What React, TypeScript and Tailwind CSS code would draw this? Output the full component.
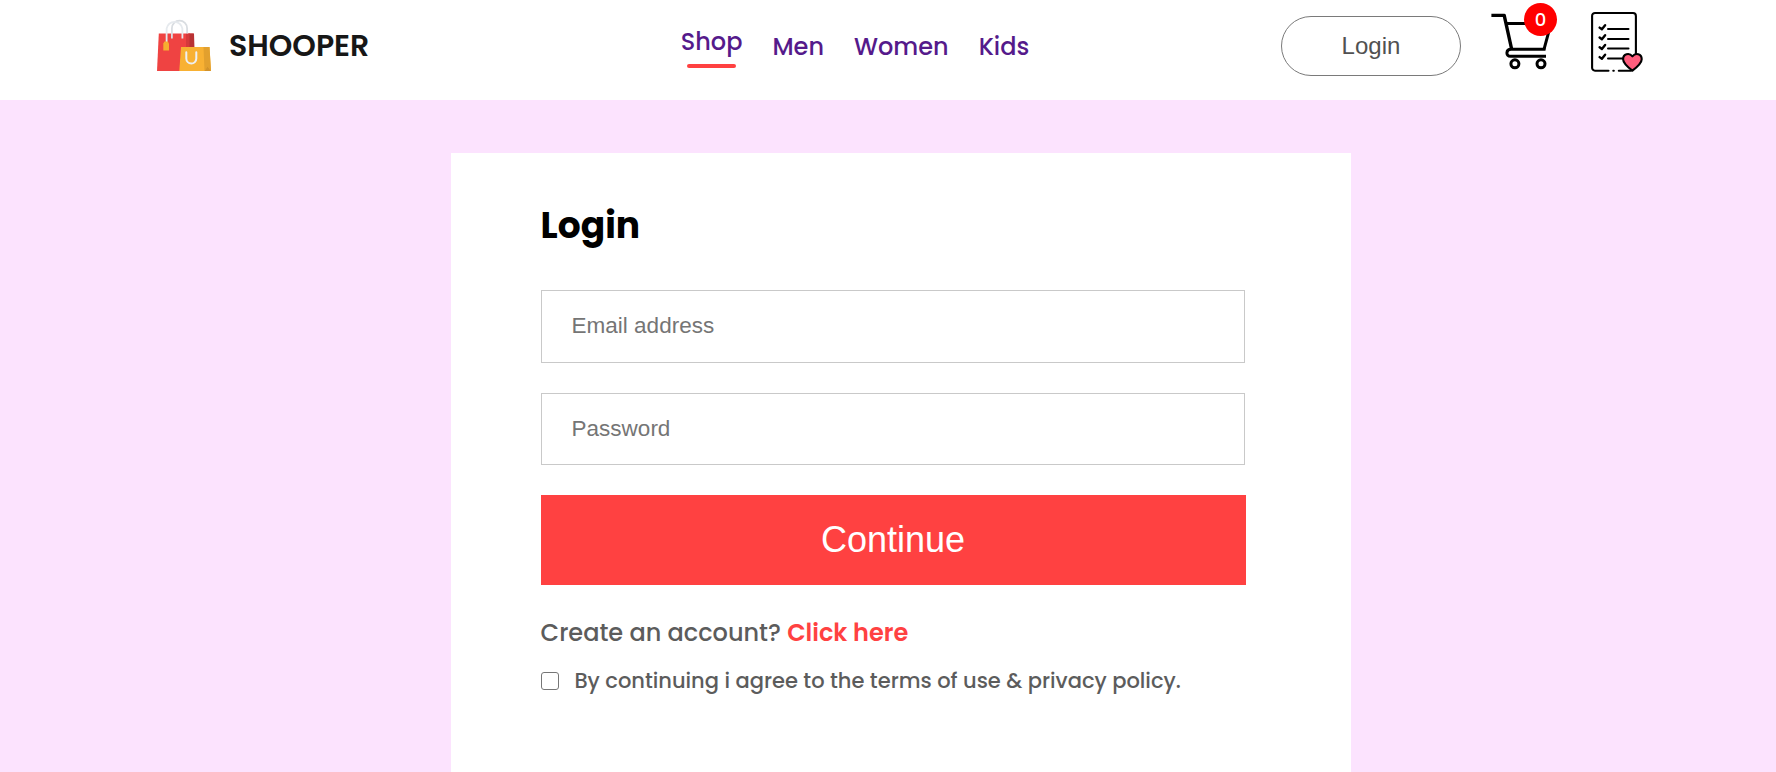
function BagLogo() {
  return (
    <svg width="60" height="60" viewBox="0 0 60 60" fill="none" className="shrink-0">
      <path d="M3.8 18.5H38.5V56H2Z" fill="#ef4342" />
      <path d="M34 18.5H39L39.5 34L34 32Z" fill="#b83234" />
      <path d="M31 18.5H34.5V32H31Z" fill="#d63a3b" />
      <path d="M16.9 23.5V13.3a7.6 7.6 0 0 1 15.2 0V18.5" stroke="#d9dde1" strokeWidth="1.8" />
      <path d="M11.6 27V13.6a8 8 0 0 1 15.8 0V23.5" stroke="#e6eaee" strokeWidth="1.8" />
      <path d="M9.5 26.5H12.8L14 28.5V35.5H8.3V28.5Z" fill="#f6ad30" />
      <path d="M26 32H54.5L56 56H24.3Z" fill="#f8b133" />
      <path d="M48.5 32H54.5L56 56L52.5 51.5L49.5 56Z" fill="#e2a02e" />
      <path d="M52.5 51.5L56 56H49.5Z" fill="#d1922b" />
      <path d="M31.3 37.2V43.6a5 5 0 0 0 10 0V37.2" stroke="#eef0f2" strokeWidth="2" strokeLinecap="round" />
    </svg>
  );
}

function CartIcon() {
  return (
    <svg width="62" height="62" viewBox="0 0 62 62" fill="none" stroke="#000" strokeWidth="3" strokeLinejoin="round" className="block">
      <path d="M1.4 6.4H14.2L21.5 39.5" strokeWidth="3.4" />
      <path d="M16.5 14.4H61L54 40.3" />
      <path d="M55.5 40.3H21C15.8 40.3 15.5 47.2 20.5 47.3H56" />
      <circle cx="24.9" cy="54.8" r="4" />
      <circle cx="51" cy="54.8" r="4" />
    </svg>
  );
}

function WishlistIcon() {
  return (
    <svg width="54" height="62" viewBox="0 0 54 62" fill="none" stroke="#000" strokeWidth="2.1" strokeLinecap="round" strokeLinejoin="round" className="block">
      <path d="M18.5 60.7H5a2.9 2.9 0 0 1-2.9-2.9V5.9A2.9 2.9 0 0 1 5 3H43a2.9 2.9 0 0 1 2.9 2.9V45" />
      <path d="M23.3 60.7h.5M28.8 60.7H41" />
      <g strokeWidth="2">
        <path d="M18 19H38.5M18 28.9H38.5M18 38.6H38.5M18 48.4H33" />
      </g>
      <g strokeWidth="2.4">
        <path d="M9.6 17.6l2.3 1.7 3.2-4" />
        <path d="M9.6 27.5l2.3 1.7 3.2-4" />
        <path d="M9.6 37.3l2.3 1.7 3.2-4" />
        <path d="M9.6 47.1l2.3 1.7 3.2-4" />
      </g>
      <path d="M42.4 60.6C39 58 33.1 53.5 33.1 49.2C33.1 44 39.1 42.2 42.4 46.3C45.7 42.2 51.7 44 51.7 49.2C51.7 53.5 45.8 58 42.4 60.6Z" fill="#ff5d7d" />
    </svg>
  );
}

function Header() {
  return (
    <header className="flex h-[100px] items-start bg-white pl-[155px]">
      <div className="flex w-[525.8px] items-start gap-[14px] pt-[15px]">
        <BagLogo />
        <p className="pt-[7.5px] text-[30px] leading-[45px] font-semibold text-[#171717]">SHOOPER</p>
      </div>
      <nav className="flex w-[600.2px] gap-[30px] pt-[24px] text-[24px] leading-9 font-medium text-[#551a8b]">
        <a className="flex flex-col items-center">
          Shop
          <span className="mt-1 h-1 w-4/5 rounded-[10px] bg-[#ff4141]" />
        </a>
        <a className="pt-[5px]">Men</a>
        <a className="pt-[5px]">Women</a>
        <a className="pt-[5px]">Kids</a>
      </nav>
      <button className="mt-4 h-[60px] w-[180px] rounded-full border border-[#7a7a7a] bg-white font-['Liberation_Sans',Arial,sans-serif] text-[24px] text-[#515151]">
        Login
      </button>
      <div className="relative mt-[9px] ml-[29px]">
        <CartIcon />
        <span className="absolute -top-[6px] left-[34px] flex size-[33px] items-center justify-center rounded-full bg-[#ff0000] text-[18px] font-medium text-white">
          0
        </span>
      </div>
      <div className="mt-[10px] ml-[38px]">
        <WishlistIcon />
      </div>
    </header>
  );
}

export default function App() {
  const field =
    "w-[704px] border border-[#c9c9c9] bg-white pl-[30px] font-['Liberation_Sans',Arial,sans-serif] text-[22.5px] text-[#5c5c5c] outline-none placeholder:text-[#757575]";
  return (
    <div className="h-[772px] overflow-hidden bg-white font-['Poppins',sans-serif]">
      <Header />
      <main className="flex h-[672px] justify-center bg-[#fce3fe] pt-[53px] pl-[25.2px]">
        <section className="w-[900px] bg-white px-[90px] pt-[46px]">
          <h1 className="text-[36px] leading-[54px] font-bold text-black">Login</h1>
          <div className="mt-[37px] flex flex-col">
            <input className={`${field} h-[73px] pb-[2px]`} type="email" placeholder="Email address" />
            <input className={`${field} mt-[30px] h-[72px] pb-px`} type="password" placeholder="Password" />
          </div>
          <button className="mt-[30px] h-[90px] w-[705px] bg-[#ff4141] font-['Liberation_Sans',Arial,sans-serif] text-[36px] text-white">
            Continue
          </button>
          <p className="mt-[30px] text-[24px] leading-9 font-medium text-[#5c5c5c]">
            Create an account? <span className="font-semibold text-[#ff4141]">Click here</span>
          </p>
          <label className="mt-[14px] flex items-center text-[21px] leading-8 font-medium text-[#5c5c5c]">
            <input type="checkbox" className="mr-[15.8px] size-[18px] appearance-none rounded-[3px] border border-[#767676] bg-white" />
            By continuing i agree to the terms of use &amp; privacy policy.
          </label>
        </section>
      </main>
    </div>
  );
}
